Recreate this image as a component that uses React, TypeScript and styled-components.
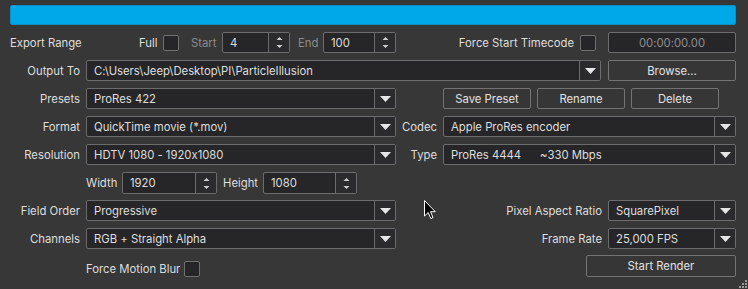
import React from "react";
import styled, { createGlobalStyle } from "styled-components";

const Global = createGlobalStyle`
  html, body { margin: 0; padding: 0; background: #373737; }
  body {
    font-family: Inter, "Noto Sans", sans-serif;
    font-size: 11.3px;
    font-feature-settings: "calt" 0;
    color: #dedede;
  }
  * { box-sizing: border-box; }
`;

const Window = styled.div`
  position: relative;
  width: 748px;
  height: 289px;
  background: #373737;
  padding: 5px 12px 0 10px;
  overflow: hidden;
`;

const Progress = styled.div`
  height: 20px;
  background: #00a8e9;
  border: 1px solid #0a8ec4;
  border-radius: 2px;
  margin-bottom: 7px;
`;

const Row = styled.div<{ $mt?: number; $h?: number }>`
  display: flex;
  align-items: center;
  height: ${(p) => p.$h ?? 21}px;
  margin-top: ${(p) => p.$mt ?? 7}px;
`;

const Group = styled.div<{ $pt?: number }>`
  display: flex;
  align-items: center;
  padding-top: ${(p) => p.$pt ?? 0}px;
`;

const Label = styled.div<{ $w?: number; $left?: boolean; $dim?: boolean }>`
  flex: none;
  width: ${(p) => (p.$w ? `${p.$w}px` : "auto")};
  text-align: ${(p) => (p.$left ? "left" : "right")};
  color: ${(p) => (p.$dim ? "#8c8c8c" : "#dedede")};
  white-space: nowrap;
  margin-right: 6px;
`;

const Spacer = styled.div<{ $w?: number }>`
  flex: ${(p) => (p.$w ? "none" : "1")};
  width: ${(p) => (p.$w ? `${p.$w}px` : "auto")};
`;

const Box = styled.div<{ $w: number; $ml?: number }>`
  flex: none;
  display: flex;
  width: ${(p) => p.$w}px;
  height: 100%;
  margin-left: ${(p) => p.$ml ?? 0}px;
  background: #262628;
  border: 1px solid #6c6c6c;
  border-radius: 2px;
  overflow: hidden;
`;

const Value = styled.div<{ $center?: boolean; $dim?: boolean }>`
  flex: 1;
  display: flex;
  align-items: center;
  justify-content: ${(p) => (p.$center ? "center" : "flex-start")};
  padding-left: ${(p) => (p.$center ? 0 : 7)}px;
  color: ${(p) => (p.$dim ? "#8e8e8e" : "#dedede")};
  white-space: pre;
`;

const Part = styled.span<{ $gap: number }>`
  flex: none;
  margin-right: ${(p) => p.$gap}px;
`;

const Side = styled.div`
  flex: none;
  width: 21px;
  border-left: 1px solid #6c6c6c;
  display: flex;
  flex-direction: column;
  align-items: center;
  justify-content: center;
  background: #2b2b2d;
`;

const Check = styled.div<{ $ml?: number }>`
  flex: none;
  width: 16px;
  height: 16px;
  margin-left: ${(p) => p.$ml ?? 0}px;
  border: 1px solid #707070;
  border-radius: 2px;
  background: #262628;
`;

const Button = styled.div<{ $w: number; $ml?: number; $h?: number }>`
  flex: none;
  width: ${(p) => p.$w}px;
  height: ${(p) => p.$h ?? 21}px;
  margin-left: ${(p) => p.$ml ?? 0}px;
  display: flex;
  align-items: center;
  justify-content: center;
  border: 1px solid #737373;
  border-radius: 2px;
  background: #363636;
  color: #e2e2e2;
`;

const Down = () => (
  <svg width="11" height="6" viewBox="0 0 11 6">
    <path d="M0 0 H11 L5.5 6 Z" fill="#e6e6e6" />
  </svg>
);

const UpDown = () => (
  <svg width="7" height="13" viewBox="0 0 7 13">
    <path d="M0.5 4 L3.5 1 L6.5 4 Z" fill="#cfcfcf" />
    <path d="M0.5 9 L3.5 12 L6.5 9 Z" fill="#cfcfcf" />
  </svg>
);

const Combo: React.FC<{ w: number; ml?: number; v: React.ReactNode }> = ({ w, ml, v }) => (
  <Box $w={w} $ml={ml}>
    <Value>{v}</Value>
    <Side>
      <Down />
    </Side>
  </Box>
);

const Spin: React.FC<{ w: number; v: string }> = ({ w, v }) => (
  <Box $w={w}>
    <Value>{v}</Value>
    <Side>
      <UpDown />
    </Side>
  </Box>
);

const Cursor = styled.svg`
  position: absolute;
  left: 424px;
  top: 200px;
`;

const Grip = styled.svg`
  position: absolute;
  right: 0;
  bottom: 0;
`;

export default function App() {
  return (
    <>
      <Global />
      <Window>
        <Progress />
        <Row $mt={0}>
          <Label $w={123} $left>Export Range</Label>
          <Label $w={18}>Full</Label>
          <Check />
          <Spacer $w={12} />
          <Label $w={25} $dim>Start</Label>
          <Spin w={68} v="4" />
          <Spacer $w={8} />
          <Label $w={19} $dim>End</Label>
          <Spin w={73} v="100" />
          <Spacer />
          <Label>Force Start Timecode</Label>
          <Check />
          <Box $w={128} $ml={12}>
            <Value $center $dim>00:00:00.00</Value>
          </Box>
        </Row>
        <Row>
          <Label $w={70}>Output To</Label>
          <Combo w={515} v="C:\Users\Jeep\Desktop\PI\ParticleIllusion" />
          <Button $w={128} $ml={7}>Browse...</Button>
        </Row>
        <Row>
          <Label $w={70}>Presets</Label>
          <Combo w={310} v="ProRes 422" />
          <Button $w={88} $ml={47}>Save Preset</Button>
          <Button $w={88} $ml={6}>Rename</Button>
          <Button $w={88} $ml={6}>Delete</Button>
        </Row>
        <Row>
          <Label $w={70}>Format</Label>
          <Combo w={310} v="QuickTime movie (*.mov)" />
          <Label $w={41}>Codec</Label>
          <Combo w={293} v="Apple ProRes encoder" />
        </Row>
        <Row>
          <Label $w={70}>Resolution</Label>
          <Combo w={310} v="HDTV 1080 - 1920x1080" />
          <Label $w={41}>Type</Label>
          <Combo
            w={293}
            v={
              <>
                <Part $gap={19}>ProRes 4444</Part>
                <Part $gap={0}>~330 Mbps</Part>
              </>
            }
          />
        </Row>
        <Row $h={22}>
          <Spacer $w={76} />
          <Label $w={30} $left>Width</Label>
          <Spin w={95} v="1920" />
          <Spacer $w={6} />
          <Label $w={34} $left>Height</Label>
          <Spin w={94} v="1080" />
        </Row>
        <Row $mt={6}>
          <Label $w={70}>Field Order</Label>
          <Combo w={310} v="Progressive" />
          <Label $w={206}>Pixel Aspect Ratio</Label>
          <Combo w={128} v="SquarePixel" />
        </Row>
        <Row>
          <Label $w={70}>Channels</Label>
          <Combo w={310} v="RGB + Straight Alpha" />
          <Label $w={206}>Frame Rate</Label>
          <Combo w={128} v="25,000 FPS" />
        </Row>
        <Row $mt={6} $h={22}>
          <Spacer $w={76} />
          <Group $pt={6}>
            <Label $w={92} $left>Force Motion Blur</Label>
            <Check />
          </Group>
          <Spacer />
          <Button $w={150} $h={22}>Start Render</Button>
        </Row>
        <Cursor width="12" height="20" viewBox="0 0 12 20">
          <path
            d="M0.5 0.5 V16 L4.2 12.5 L6.8 18.5 L9 17.5 L6.5 11.7 H11.3 Z"
            fill="#000"
            stroke="#fff"
            strokeWidth="1"
          />
        </Cursor>
        <Grip width="11" height="11" viewBox="0 0 11 11">
          {[
            [8, 2],
            [5, 5],
            [8, 5],
            [2, 8],
            [5, 8],
            [8, 8],
          ].map(([x, y], i) => (
            <rect key={i} x={x} y={y} width="2" height="2" fill="#9a9a9a" />
          ))}
        </Grip>
      </Window>
    </>
  );
}
